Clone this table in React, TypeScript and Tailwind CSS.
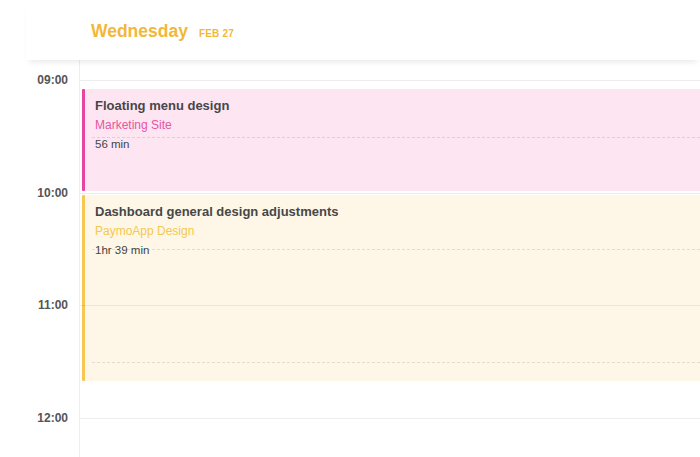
import React from "react";

const hours = ["09:00", "10:00", "11:00", "12:00"];

type CalEvent = {
  title: string;
  project: string;
  duration: string;
  top: number;
  height: number;
  bar: string;
  bg: string;
  projectColor: string;
};

const events: CalEvent[] = [
  {
    title: "Floating menu design",
    project: "Marketing Site",
    duration: "56 min",
    top: 29,
    height: 102,
    bar: "bg-[#e8449e]",
    bg: "bg-[#fde5f2]",
    projectColor: "text-[#e6559f]",
  },
  {
    title: "Dashboard general design adjustments",
    project: "PaymoApp Design",
    duration: "1hr 39 min",
    top: 135,
    height: 186,
    bar: "bg-[#f6c853]",
    bg: "bg-[#fef7e7]",
    projectColor: "text-[#f4c84f]",
  },
];

export default function App() {
  return (
    <div className="h-[457px] w-[700px] overflow-hidden bg-white font-['Liberation_Sans',Arial,sans-serif]">
      {/* day header */}
      <header className="relative z-10 ml-[26px] flex h-[60px] items-baseline bg-white pl-[65px] pt-[18px] shadow-[0_5px_6px_-3px_rgba(0,0,0,0.09)]">
        <h1 className="text-[17.5px] font-bold text-[#f2b838]">Wednesday</h1>
        <span className="ml-[11px] text-[10px] font-bold tracking-[0.02em] text-[#f2b838]">FEB 27</span>
      </header>

      <div className="flex">
        {/* time gutter */}
        <div className="w-[79px] shrink-0 pt-[20px]">
          {hours.map((h) => (
            <div key={h} className="flex h-[112.67px] flex-col pr-[11px] text-right">
              <span className="relative -top-[8px] text-[12px] font-semibold leading-[16px] text-[#555]">{h}</span>
            </div>
          ))}
        </div>

        {/* day column */}
        <div className="relative h-[397px] flex-1 border-l border-[#eeeeee]">
          {events.map((e) => (
            <div
              key={e.title}
              className={`absolute left-[2px] right-0 flex ${e.bg}`}
              style={{ top: e.top, height: e.height }}
            >
              <div className={`w-[3px] shrink-0 rounded-[1px] ${e.bar}`} />
              <div className="pl-[10px] pt-[8px]">
                <div className="text-[13px] font-bold leading-[17px] text-[#474747]">{e.title}</div>
                <div className={`mt-[3px] text-[12px] leading-[16px] ${e.projectColor}`}>{e.project}</div>
                <div className="mt-[3px] text-[11.5px] leading-[16px] text-[#454545]">{e.duration}</div>
              </div>
            </div>
          ))}

          {/* grid lines over events */}
          <div className="pointer-events-none absolute inset-0 pt-[20px]">
            {hours.map((h) => (
              <div key={h} className="relative h-[112.67px] border-t border-[rgba(0,0,0,0.07)]">
                <div className="absolute left-[12px] right-0 top-[55.5px] border-t border-dashed border-[rgba(0,0,0,0.1)]" />
              </div>
            ))}
          </div>
        </div>
      </div>
    </div>
  );
}
